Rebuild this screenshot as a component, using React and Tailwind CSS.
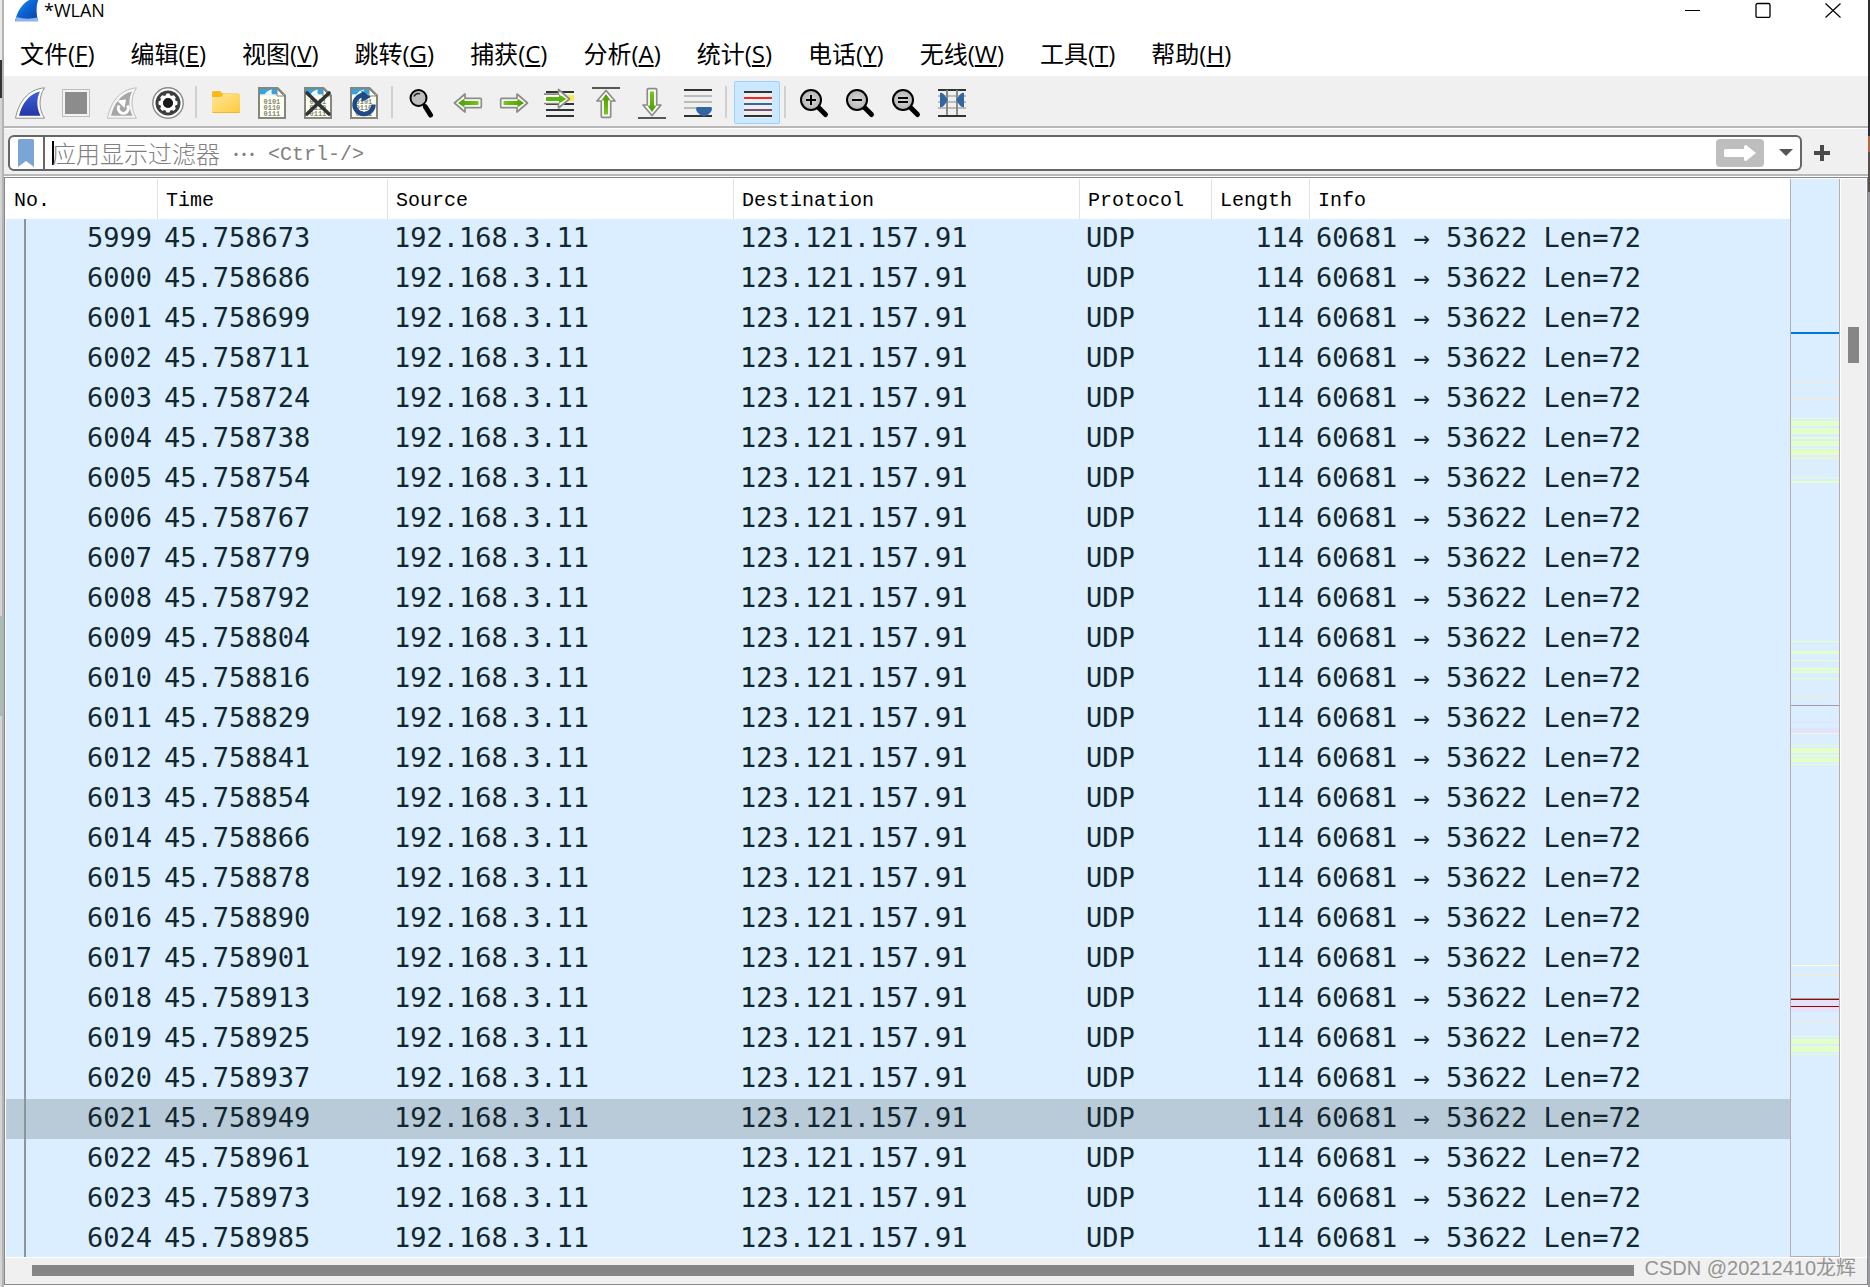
import React from "react";

const MENUS = [
  ["文件", "F"], ["编辑", "E"], ["视图", "V"], ["跳转", "G"], ["捕获", "C"], ["分析", "A"],
  ["统计", "S"], ["电话", "Y"], ["无线", "W"], ["工具", "T"], ["帮助", "H"],
];

const TIMES = [
  673, 686, 699, 711, 724, 738, 754, 767, 779, 792, 804, 816, 829, 841, 854, 866, 878, 890, 901,
  913, 925, 937, 949, 961, 973, 985,
];

const PACKETS = TIMES.map((t, i) => ({
  no: 5999 + i,
  time: "45.758" + t,
  source: "192.168.3.11",
  destination: "123.121.157.91",
  protocol: "UDP",
  length: 114,
  info: "60681 → 53622 Len=72",
}));

const SELECTED = 6021;

const GREEN = "#e4ffc7";
const ORANGE = "#ffe9cc";
const LAVENDER = "#e5e1fb";

/* [top, height, colour] of each band of the packet map */
const BANDS = [
  [153, 2, "#0078d7"], [201, 1, ORANGE], [220, 1, ORANGE],
  [239, 1, GREEN], [242, 5, GREEN], [249, 6, GREEN], [258, 2, GREEN], [262, 5, GREEN],
  [269, 1, GREEN], [271, 5, GREEN], [277, 1, ORANGE], [279, 1, GREEN],
  [298, 1, GREEN], [302, 2, GREEN],
  [462, 1, GREEN], [472, 3, GREEN], [481, 1, GREEN], [489, 2, GREEN], [492, 2, GREEN], [499, 1, GREEN],
  [517, 1, ORANGE], [526, 1, "#a79aa6"], [543, 1, LAVENDER], [549, 5, "#dfe4fc"], [554, 1, "#fdf3cf"],
  [566, 1, GREEN], [569, 5, GREEN], [576, 2, GREEN], [579, 4, GREEN], [585, 1, GREEN],
  [786, 1, "#feffd0"], [796, 1, ORANGE], [819, 1, "#a0a0a0"], [820, 1, "#a40000"],
  [821, 6, LAVENDER], [827, 1, "#a40000"], [828, 5, LAVENDER], [841, 1, ORANGE],
  [857, 1, GREEN], [860, 5, GREEN], [867, 6, GREEN], [875, 1, GREEN],
];

const Svg = ({ children }) => (
  <svg width="32" height="32" viewBox="0 0 32 32" fill="none" aria-hidden="true">{children}</svg>
);

const FIN = "M1.5 31.2C4.5 16 13 2.5 30.5 .8C24.500 10 24.500 22 30.500 31.200Z";
const FIN_INNER = "M5 28.700C8 17 14.500 7 26 4.500C22.200 12 22.700 21 26.500 28.700Z";

const Fin = () => (
  <Svg>
    <defs>
      <linearGradient id="fin" x1="0" y1="0" x2="0" y2="1">
        <stop offset="0" stopColor="#3c62d8" /><stop offset="1" stopColor="#2436a6" />
      </linearGradient>
    </defs>
    <path d={FIN} fill="#fff" stroke="#8f8f8f" />
    <path d={FIN_INNER} fill="url(#fin)" />
  </Svg>
);

const Stop = () => (
  <Svg>
    <rect x="2.500" y="2.500" width="27" height="27" fill="#f4f4f4" stroke="#bdbdbd" />
    <rect x="5" y="5" width="22" height="22" fill="#8c8c8c" />
  </Svg>
);

const Restart = () => (
  <Svg>
    <path d={FIN} fill="#f6f6f6" stroke="#bdbdbd" />
    <path d={FIN_INNER} fill="#a6a6a6" />
    <path d="M13.200 18.500a5 5 0 1 0 8.200 0" stroke="#fff" strokeWidth="3" />
    <path d="M11 13.500 20 12.500 18.500 21z" fill="#fff" />
  </Svg>
);

const TEETH = [0, 45, 90, 135, 180, 225, 270, 315];

const Options = () => (
  <Svg>
    <circle cx="16" cy="16" r="15.200" fill="#fff" stroke="#8a8a8a" strokeWidth="1.400" />
    <circle cx="16" cy="16" r="12.500" fill="#3c3f40" />
    {TEETH.map((a) => (
      <rect key={a} x="14" y="6.500" width="4" height="5" rx="1" fill="#fff" transform={`rotate(${a} 16 16)`} />
    ))}
    <circle cx="16" cy="16" r="6.500" stroke="#fff" strokeWidth="3" />
    <circle cx="16" cy="16" r="5" fill="#1a1a1a" />
  </Svg>
);

const Folder = () => (
  <Svg>
    <defs>
      <linearGradient id="folder" x1="0" y1="0" x2="1" y2="1">
        <stop offset="0" stopColor="#ffe69a" /><stop offset="1" stopColor="#ffca3a" />
      </linearGradient>
    </defs>
    <path d="M2 5.500a1.500 1.500 0 0 1 1.500-1.500h6.500l2.500 2.500H28a1.500 1.500 0 0 1 1.500 1.500v6H2z" fill="#f9b916" />
    <path d="M2 10h9l2.500-3H28.500a1.500 1.500 0 0 1 1.500 1.500v16a1.500 1.500 0 0 1-1.500 1.500h-25A1.500 1.500 0 0 1 2 24.500z" fill="url(#folder)" />
    <path d="M2.500 25.500h27" stroke="#f2b327" />
  </Svg>
);

const Sheet = ({ children }) => (
  <Svg>
    <path d="M3 1h18.500L29 8.500V31H3z" fill="#fffff0" stroke="#85867c" strokeWidth="2" />
    <path d="M4 2h17v5.500H4z" fill="#35a3dd" />
    <path d="M8.500 7.800C10 5 12.500 3 16 2.500c-1 2-.8 3.800.5 5.300z" fill="#fff" />
    <path d="M4 7.500h24v1H4z" fill="#d8ecf4" />
    <path d="M21 2v7h7z" fill="#fff" stroke="#85867c" />
    <g fill="#85867c" fontFamily="Liberation Mono, monospace" fontSize="7" fontWeight="700">
      <text x="7.500" y="17">0101</text>
      <text x="7.500" y="23">0110</text>
      <text x="7.500" y="29">0111</text>
    </g>
    {children}
  </Svg>
);

const CloseFile = () => (
  <Sheet><path d="M5 6 27 27M27 6 5 27" stroke="#2e3436" strokeWidth="3.600" strokeLinecap="round" /></Sheet>
);

const Reload = () => (
  <Sheet>
    <path d="M25.500 17.500a9.500 9.500 0 1 1-8-9.300" stroke="#204a87" strokeWidth="4.400" />
    <path d="M13.500 3.500 23 10 13.500 15z" fill="#204a87" />
  </Sheet>
);

const Find = () => (
  <Svg>
    <path d="M19.500 20 24.500 28" stroke="#000" strokeWidth="5" strokeLinecap="round" />
    <path d="M16.500 15.500l3 4.500" stroke="#000" strokeWidth="2.500" />
    <circle cx="12.500" cy="11" r="8" fill="#bebebe" stroke="#000" strokeWidth="2" />
    <path d="M8 9.500C9 7 11.500 6 14 6.800" stroke="#222" strokeWidth="1.500" />
  </Svg>
);

const ArrowShape = () => (
  <>
    <path d="M2.500 16 13 7v4.300h15.300q1 0 1 1v7.400q0 1-1 1H13V25z" fill="#fff" stroke="#8b8c88" strokeWidth="1.700" strokeLinejoin="round" />
    <path d="M6 16l6.500-4.600v2.600h14v4h-14v2.600z" fill="url(#green)" />
  </>
);

const GreenDefs = () => (
  <svg width="0" height="0" className="absolute" aria-hidden="true">
    <defs>
      <linearGradient id="green" x1="0" y1="0" x2="1" y2="0">
        <stop offset="0" stopColor="#4e9a06" /><stop offset="1" stopColor="#73c916" />
      </linearGradient>
      <radialGradient id="lens"><stop offset="0" stopColor="#d8d8d8" /><stop offset="1" stopColor="#b4b4b4" /></radialGradient>
    </defs>
  </svg>
);

const Back = () => <Svg><ArrowShape /></Svg>;
const Forward = () => <Svg><g transform="rotate(180 16 16)"><ArrowShape /></g></Svg>;

const GoTo = () => (
  <Svg>
    <path d="M22 8h8v6h-8z" fill="#fce94f" />
    <path d="M2 5h28M2 17h28M2 23h28M2 29h28" stroke="#2e3436" strokeWidth="2" />
    <path d="M25.500 12 14.500 2.500v4.700H0Q-1 7.200-1 8.200v7.300q0 1 1 1h14.500v4.500z" fill="#fff" stroke="#8b8c88" strokeWidth="1.700" strokeLinejoin="round" />
    <path d="M22.500 12 15 7.500v2.500H2v4h13v2.500z" fill="#5cb50c" />
  </Svg>
);

const First = () => (
  <Svg>
    <path d="M2 1h28" stroke="#555753" strokeWidth="2" />
    <g transform="translate(0 1) rotate(90 16 16)"><ArrowShape /></g>
  </Svg>
);

const Last = () => (
  <Svg>
    <path d="M2 31h28" stroke="#555753" strokeWidth="2" />
    <g transform="translate(0 -1) rotate(270 16 16)"><ArrowShape /></g>
  </Svg>
);

const AutoScroll = () => (
  <Svg>
    <path d="M2 3h28M2 29h28" stroke="#2e3436" strokeWidth="2" />
    <path d="M2 9h28M2 15h28M2 21h28" stroke="#babdb6" strokeWidth="2" />
    <path d="M14 21.500q0-1.500 1.500-1.500h13q1.500 0 1.500 1.500 0 4-5.500 7-2.500 1.800-5 0-5.500-3-5.500-7z" fill="#3465a4" />
  </Svg>
);

const Colorize = () => (
  <Svg>
    <path d="M3 4h28v27H3z" fill="#eeeeec" />
    <path d="M3 5h28M3 29h28" stroke="#2e3436" strokeWidth="2" />
    <path d="M3 11h28" stroke="#ef2929" strokeWidth="2" />
    <path d="M3 17h28" stroke="#3465a4" strokeWidth="2" />
    <path d="M3 23h28" stroke="#75507b" strokeWidth="2" />
  </Svg>
);

const Zoom = ({ d }) => (
  <Svg>
    <path d="M20.500 20.500 27.500 27.500" stroke="#000" strokeWidth="5" strokeLinecap="round" />
    <circle cx="13" cy="13" r="10" fill="url(#lens)" stroke="#000" strokeWidth="2" />
    <path d={d} stroke="#000" strokeWidth="2" />
  </Svg>
);

const Resize = () => (
  <Svg>
    <path d="M2 9h28M2 15h28M2 21h28" stroke="#babdb6" strokeWidth="2" />
    <path d="M2 3h28M2 29h28" stroke="#2e3436" strokeWidth="2" />
    <path d="M11 3v25M21 3v25" stroke="#888a85" strokeWidth="2" />
    <path d="M4 6q2-1 4 1.500l4 5.500-4 5.500Q6 21 4 20zM28 6q-2-1-4 1.500L20 13l4 5.500q2 2.500 4 1.500z" fill="#3465a4" />
  </Svg>
);

const TOOLS = [
  ["Start", <Fin />], ["Stop", <Stop />], ["Restart", <Restart />], ["Options", <Options />], null,
  ["Open", <Folder />], ["Save", <Sheet />], ["Close file", <CloseFile />], ["Reload", <Reload />], null,
  ["Find", <Find />], ["Back", <Back />], ["Forward", <Forward />], ["Go to packet", <GoTo />],
  ["First packet", <First />], ["Last packet", <Last />], ["Auto scroll", <AutoScroll />], null,
  ["Colorize", <Colorize />], null,
  ["Zoom in", <Zoom d="M8 13h10M13 8v10" />], ["Zoom out", <Zoom d="M8 13h10" />],
  ["Normal size", <Zoom d="M8 11h10M8 15h10" />], ["Resize columns", <Resize />],
];

function TitleBar() {
  const ctl = "flex h-5 w-[70px] items-center justify-center";
  return (
    <header className="flex h-8 items-start">
      <svg className="ml-[11px]" width="24" height="22" viewBox="0 0 24 22" aria-hidden="true">
        <defs>
          <linearGradient id="app" x1="0" y1="0" x2="1" y2="1">
            <stop offset="0" stopColor="#2f93f4" /><stop offset=".5" stopColor="#0a63d2" /><stop offset="1" stopColor="#0a3fa0" />
          </linearGradient>
        </defs>
        <path d="M0 21C3 9 9 1 19-2h5c-3 7-3 14-1 23z" fill="url(#app)" />
        <path d="M0 21.500 1.500 17q10 3 21 .5l.8 4z" fill="#8fb4e6" />
      </svg>
      <h1 className="ml-[5px] grow text-lg leading-5 text-black">*WLAN</h1>
      <button aria-label="Minimize" className={ctl}>
        <svg width="16" height="16" viewBox="0 0 16 16" stroke="#000"><path d="M0 8.500h15" /></svg>
      </button>
      <button aria-label="Maximize" className={ctl}>
        <svg width="16" height="16" viewBox="0 0 16 16" stroke="#000" fill="none" strokeWidth="1.300"><rect x="1" y="1.500" width="14" height="14" rx="1.500" /></svg>
      </button>
      <button aria-label="Close" className={ctl}>
        <svg width="16" height="16" viewBox="0 0 16 16" stroke="#000" strokeWidth="1.200"><path d="M.5 1.500l15 14M15.500 1.500l-15 14" /></svg>
      </button>
    </header>
  );
}

function FilterBar() {
  return (
    <form className="flex items-center border-t border-b-2 border-t-white border-b-[#b9b9b9] bg-[#f0f0f0] pt-1.5 pb-[3px] pl-1" onSubmit={(e) => e.preventDefault()}>
      <div className="flex h-9 grow items-center overflow-hidden rounded-md border-2 border-[#666] bg-white">
        <button type="button" aria-label="Bookmark" className="flex h-8 w-[35px] items-center border-r-2 border-[#666] pl-2">
          <svg width="16" height="28" viewBox="0 0 16 28">
            <path d="M0 1.500Q0 0 1.500 0h13Q16 0 16 1.500V28l-8-6-8 6z" fill="#7ba5d6" />
          </svg>
        </button>
        <div className="grid grow items-center">
          <input id="filter" type="text" className="col-start-1 row-start-1 h-8 w-full bg-transparent px-2 outline-none" />
          <label htmlFor="filter" className="pointer-events-none col-start-1 row-start-1 ml-[7px] flex items-center text-[#808080]">
            <span className="-mr-0.5 h-6 w-0.5 bg-black" />
            <span className="text-2xl leading-8 font-light font-['Noto_Sans_CJK_SC',sans-serif]">应用显示过滤器</span>
            <span className="mx-3 w-6 text-center text-2xl leading-8 font-['Noto_Sans_CJK_SC',sans-serif]">⋯</span>
            <span className="pt-1 text-xl leading-7 font-['Liberation_Mono',monospace]">&lt;Ctrl-/&gt;</span>
          </label>
        </div>
        <button aria-label="Apply" className="flex h-7 w-12 items-center justify-center rounded bg-[#bebebe]">
          <svg width="32" height="16" viewBox="0 0 32 16"><path d="M1.500 4H20V1.500Q20 0 22 0l10 8-10 8q-2 0-2-1.500V12H1.500Q0 12 0 10.500v-5Q0 4 1.500 4z" fill="#fff" /></svg>
        </button>
        <button type="button" aria-label="Recent filters" className="flex h-8 w-9 items-center justify-center pl-2">
          <svg width="14" height="7" viewBox="0 0 14 7"><path d="M0 0h14L7 7z" fill="#555" /></svg>
        </button>
      </div>
      <button type="button" aria-label="Add" className="mr-[38px] ml-3">
        <svg width="16" height="16" viewBox="0 0 16 16"><path d="M6 0h4v6h6v4h-6v6H6v-6H0V6h6z" fill="#4a4a4a" /></svg>
      </button>
    </form>
  );
}

function PacketTable() {
  const th = "h-10 border-r border-[#e2e2e2] bg-white pt-1 pl-2 text-left font-normal";
  const td = "h-10 pl-1.5 align-top";
  return (
    <table className="w-full table-fixed border-separate border-spacing-0 whitespace-nowrap text-[#12272e]">
      <colgroup>
        <col className="w-[152px]" /><col className="w-[230px]" /><col className="w-[346px]" /><col className="w-[346px]" />
        <col className="w-[132px]" /><col className="w-[98px]" /><col />
      </colgroup>
      <thead className="text-xl text-black font-['Liberation_Mono',monospace]">
        <tr>
          {["No.", "Time", "Source", "Destination", "Protocol", "Length"].map((h) => <th key={h} className={th}>{h}</th>)}
          <th className="h-10 bg-white pt-1 pl-2 text-left font-normal">Info</th>
        </tr>
      </thead>
      <tbody className="text-[27px] leading-[38px] font-['DejaVu_Sans_Mono',monospace]">
        {PACKETS.map((p) => (
          <tr key={p.no} className={p.no === SELECTED ? "bg-[#b9cad8]" : "bg-[#daeeff]"}>
            <td className="h-10">
              <div className="flex h-10 justify-between pr-1.5 pl-[18px]">
                <span className="h-10 w-0.5 bg-[#8a959c]" />
                <span>{p.no}</span>
              </div>
            </td>
            <td className={td}>{p.time}</td>
            <td className={td}>{p.source}</td>
            <td className={td}>{p.destination}</td>
            <td className={td}>{p.protocol}</td>
            <td className="h-10 pr-1.5 text-right align-top">{p.length}</td>
            <td className={td}>{p.info}</td>
          </tr>
        ))}
      </tbody>
    </table>
  );
}

export default function App() {
  return (
    <div className="relative flex h-screen overflow-hidden bg-[#a3a3a5] font-['Open_Sans','Noto_Sans_CJK_SC',sans-serif]">
      <GreenDefs />
      <div className="flex w-1 shrink-0 flex-col border-r-2 border-[#b4b4b4] bg-[#d4d4d4]">
        <div className="h-[60px] bg-[#e8e8e8]" />
        <div className="h-[38px] bg-[#333]" />
        <div className="h-[518px]" />
        <div className="h-[100px] bg-[#a5bdb3]" />
      </div>
      <main className="flex min-w-0 grow flex-col bg-white">
        <TitleBar />
        <nav className="flex h-11 items-center gap-9 pl-4 text-2xl whitespace-nowrap text-black">
          {MENUS.map(([name, key]) => (
            <button key={key}>{name}(<span className="underline decoration-2 underline-offset-2">{key}</span>)</button>
          ))}
        </nav>
        <div role="toolbar" className="flex h-[52px] shrink-0 items-start border-t border-b-2 border-t-[#f0f0f0] border-b-[#b9b9b9] bg-[#f0f0f0] pt-1 pl-[3px]">
          {TOOLS.map((t, i) =>
            t ? (
              <button
                key={i}
                aria-label={t[0]}
                className={
                  t[0] === "Colorize"
                    ? "ml-px flex h-[43px] w-[46px] items-center justify-center rounded-xs border border-[#99d1ff] bg-[#cce8ff] pt-px"
                    : "flex h-[43px] w-[46px] items-center justify-center pt-px"
                }
              >
                {t[1]}
              </button>
            ) : (
              <span key={i} className="mt-[5px] mr-1.5 ml-1 h-8 w-0.5 bg-[#d0d0d0] last-of-type:mr-[5px]" />
            )
          )}
        </div>
        <FilterBar />
        <section className="mt-px mb-0.5 flex min-h-0 grow flex-col border border-[#828790] bg-[#f0f0f0]">
          <div className="flex min-h-0 grow border border-white">
            <div className="min-w-0 grow overflow-hidden"><PacketTable /></div>
            <div className="w-[50px] shrink-0 border-x border-b border-[#b0b0b0] bg-[#daeeff]">
              <svg className="h-full w-full" viewBox="0 0 48 1077" preserveAspectRatio="none" shapeRendering="crispEdges" aria-hidden="true">
                {BANDS.map(([y, h, c]) => <rect key={y} x="0" y={y} width="48" height={h} fill={c} />)}
              </svg>
            </div>
            <div className="w-[26px] shrink-0 border-l border-white bg-[#f0f0f0] pt-[148px] pl-[7px]">
              <div className="h-9 w-[11px] bg-[#868686]" />
            </div>
          </div>
          <div className="mr-[233px] ml-[27px] h-[26px] pt-[7px]">
            <div className="h-[11px] bg-[#868686]" />
          </div>
        </section>
      </main>
      <div className="flex w-0.5 shrink-0 flex-col bg-[#9a9b9d]">
        <div className="h-[136px] bg-[#2c2c2e]" />
        <div className="h-4 bg-[#c0623a]" />
        <div className="h-10 bg-[#57504c]" />
      </div>
      <p className="absolute right-3.5 bottom-[7px] text-xl leading-6 text-[#949494] font-['Liberation_Sans','Noto_Sans_CJK_SC',sans-serif]">CSDN @20212410龙辉</p>
    </div>
  );
}
